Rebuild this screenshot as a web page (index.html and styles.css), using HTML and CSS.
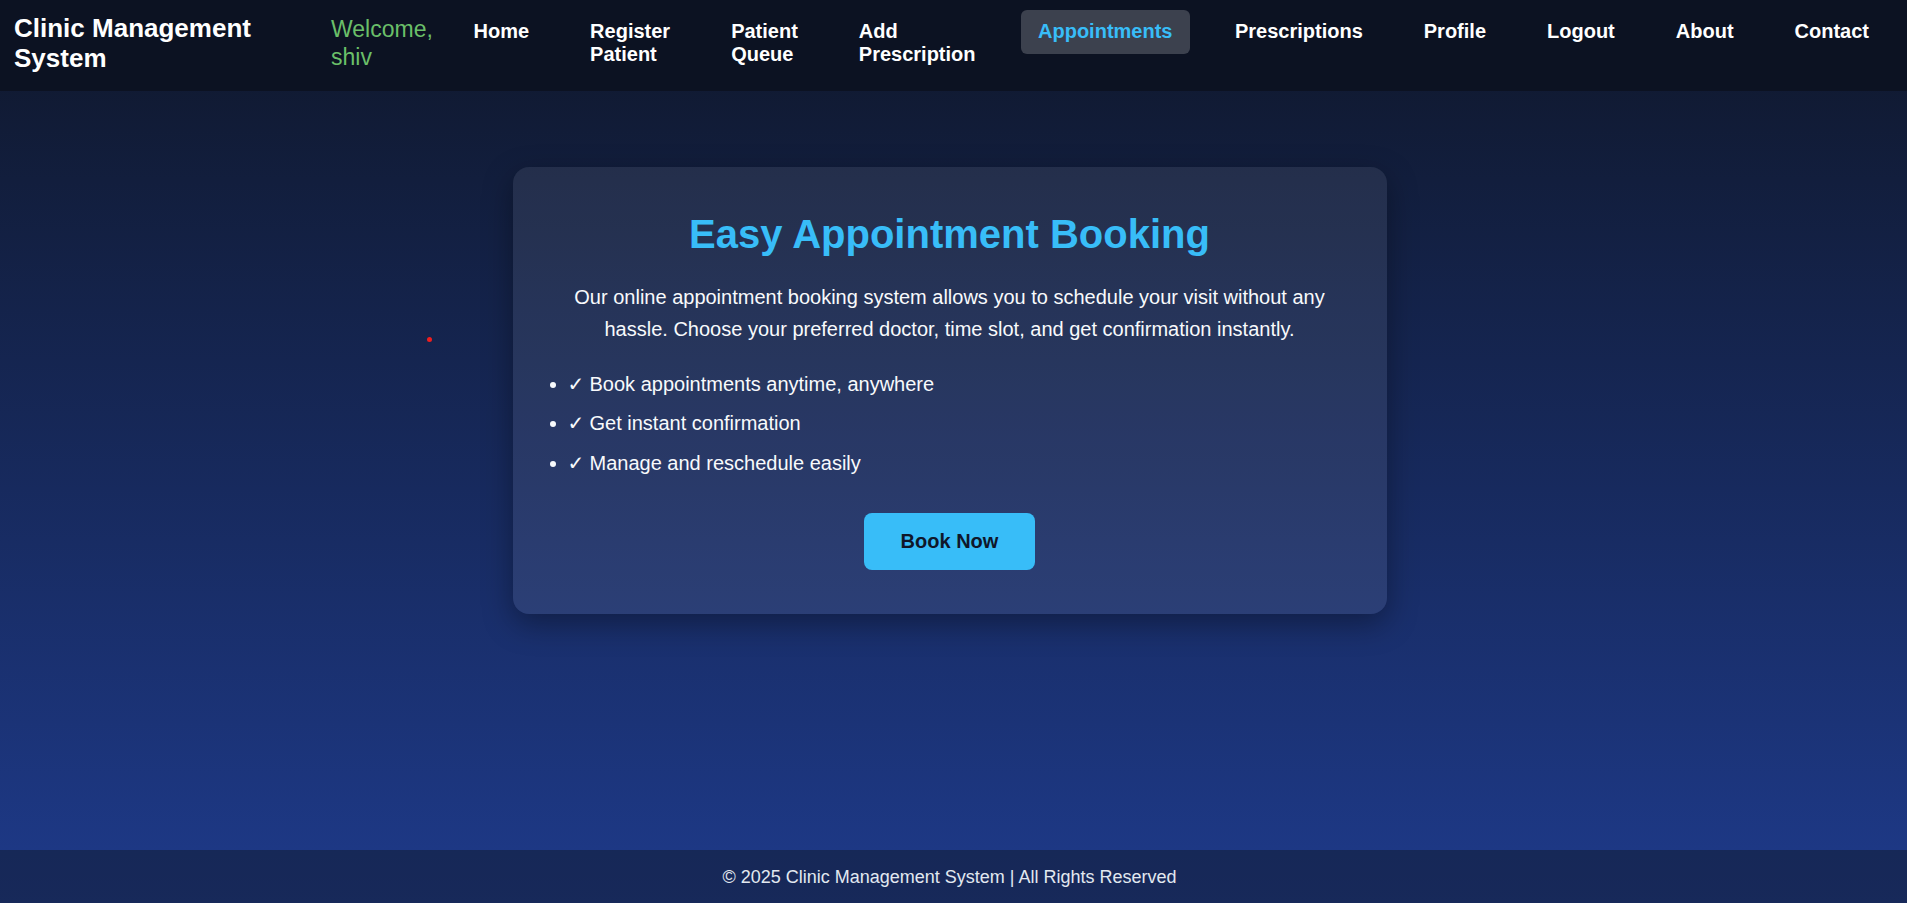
FILE: index.html
```html
<!DOCTYPE html>
<html lang="en">
<head>
<meta charset="utf-8">
<title>Clinic Management System - Appointments</title>
<link rel="stylesheet" href="styles.css">
</head>
<body>
  <header class="site-header">
    <h1 class="logo">Clinic Management System</h1>
    <span class="welcome">Welcome, shiv</span>
    <nav class="nav">
      <ul class="nav-list">
        <li><a href="#" class="nav-link">Home</a></li>
        <li><a href="#" class="nav-link wrap">Register Patient</a></li>
        <li><a href="#" class="nav-link wrap">Patient Queue</a></li>
        <li><a href="#" class="nav-link wrap">Add Prescription</a></li>
        <li><a href="#" class="nav-link active">Appointments</a></li>
        <li><a href="#" class="nav-link">Prescriptions</a></li>
        <li><a href="#" class="nav-link">Profile</a></li>
        <li><a href="#" class="nav-link">Logout</a></li>
        <li><a href="#" class="nav-link">About</a></li>
        <li><a href="#" class="nav-link">Contact</a></li>
      </ul>
    </nav>
  </header>

  <main class="main">
    <span class="cursor-dot"></span>
    <section class="card">
      <h2 class="card-title">Easy Appointment Booking</h2>
      <p class="card-text">Our online appointment booking system allows you to schedule your visit without any hassle. Choose your preferred doctor, time slot, and get confirmation instantly.</p>
      <ul class="features">
        <li><span class="check">✓</span>Book appointments anytime, anywhere</li>
        <li><span class="check">✓</span>Get instant confirmation</li>
        <li><span class="check">✓</span>Manage and reschedule easily</li>
      </ul>
      <div class="actions">
        <a href="#" class="btn">Book Now</a>
      </div>
    </section>
  </main>

  <footer class="site-footer">
    <p class="footer-text">© 2025 Clinic Management System | All Rights Reserved</p>
  </footer>
</body>
</html>
```

FILE: styles.css
```css
* {
  box-sizing: border-box;
}

html, body {
  margin: 0;
  padding: 0;
}

body {
  font-family: "Liberation Sans", Arial, "DejaVu Sans", sans-serif;
  color: #ffffff;
  min-height: 100vh;
  display: flex;
  flex-direction: column;
  background: linear-gradient(to bottom, #0f172a 0%, #1e3a8a 100%);
}

/* Header */
.site-header {
  display: flex;
  align-items: center;
  padding: 10px 22px 15px 14px;
  background: #0c1222;
  height: 91px;
}

.logo {
  flex: 0 0 250px;
  width: 250px;
  margin: 0;
  font-size: 26px;
  font-weight: bold;
  line-height: 30.5px;
  color: #ffffff;
}

.welcome {
  flex: 0 0 110px;
  width: 110px;
  margin-left: 67px;
  font-size: 23px;
  line-height: 28px;
  color: #6abf69;
}

.nav {
  margin-left: auto;
}

.nav-list {
  display: flex;
  align-items: flex-start;
  gap: 29px;
  list-style: none;
  margin: 0;
  padding: 0;
}

.nav-link {
  display: block;
  padding: 10px 16px;
  font-size: 20px;
  line-height: 23px;
  font-weight: bold;
  color: #ffffff;
  text-decoration: none;
  white-space: nowrap;
  border-radius: 6px;
}

.nav-link.wrap {
  white-space: normal;
  width: min-content;
  box-sizing: content-box;
}

.nav-link.active {
  padding: 10px 17.5px 11px;
  background: rgba(255, 255, 255, 0.2);
  color: #38bdf8;
}

/* Main */
.main {
  position: relative;
  flex: 1;
  display: flex;
  flex-direction: column;
  align-items: center;
  padding: 76px 8px 0 0;
}

.cursor-dot {
  position: absolute;
  left: 427px;
  top: 246px;
  width: 5px;
  height: 5px;
  border-radius: 50%;
  background: #f01e1e;
}

.card {
  width: 874px;
  padding: 44px 40px 44px;
  border-radius: 16px;
  background: rgba(255, 255, 255, 0.08);
  box-shadow: 0 10px 30px rgba(0, 0, 0, 0.35);
}

.card-title {
  margin: 0 0 24px;
  text-align: center;
  font-size: 40px;
  line-height: 46px;
  font-weight: bold;
  color: #38bdf8;
}

.card-text {
  margin: 0;
  text-align: center;
  font-size: 20px;
  line-height: 32px;
  color: #f8fafc;
}

.features {
  margin: 22.5px 0 0;
  padding: 0 0 0 16.5px;
  list-style: disc outside;
}

.features li {
  font-size: 20px;
  line-height: 32px;
  margin-bottom: 7.5px;
  color: #f8fafc;
}

.features li:last-child {
  margin-bottom: 0;
}

.check {
  display: inline-block;
  width: 20.5px;
  margin-left: -1.5px;
  padding-right: 1.5px;
  box-sizing: content-box;
  font-family: "DejaVu Sans", sans-serif;
  font-size: 20px;
  font-weight: bold;
}

.actions {
  display: flex;
  justify-content: center;
  margin-top: 34px;
}

.btn {
  display: block;
  padding: 17px 37px;
  font-size: 20px;
  line-height: 23.5px;
  font-weight: bold;
  color: #0f172a;
  background: #38bdf8;
  border-radius: 8px;
  text-decoration: none;
}

/* Footer */
.site-footer {
  background: rgba(15, 23, 42, 0.5);
  padding: 17px 8px 15px 0;
  text-align: center;
}

.footer-text {
  margin: 0;
  font-size: 18px;
  line-height: 21px;
  color: #e2e8f0;
}
```
